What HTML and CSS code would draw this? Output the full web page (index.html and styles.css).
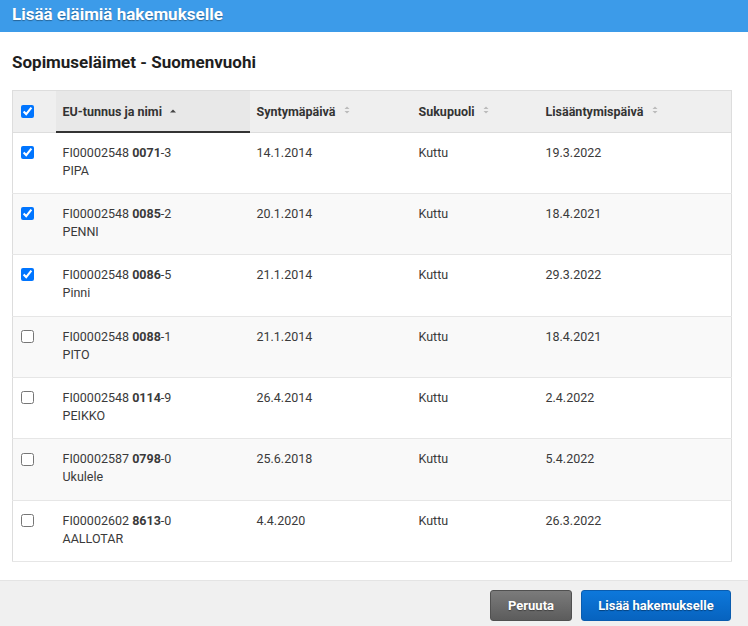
FILE: index.html
```html
<!DOCTYPE html>
<html lang="fi">
<head>
<meta charset="utf-8">
<title>Lisää eläimiä hakemukselle</title>
<link rel="stylesheet" href="styles.css">
</head>
<body>
<div class="dialog">
  <header class="titlebar">Lisää eläimiä hakemukselle</header>
  <main class="content">
    <h2 class="subtitle">Sopimuseläimet - Suomenvuohi</h2>
    <table class="grid">
      <colgroup>
        <col class="c-check"><col class="c-eu"><col class="c-birth"><col class="c-sex"><col class="c-repro">
      </colgroup>
      <thead>
        <tr>
          <th class="check"><input type="checkbox" checked></th>
          <th class="sorted">EU-tunnus ja nimi <svg class="sort" width="8" height="8" viewBox="0 0 8 8"><path d="M1 5.5 L4 2.5 L7 5.5 Z" fill="#444"/></svg></th>
          <th>Syntymäpäivä <svg class="sort" width="8" height="10" viewBox="0 0 8 10"><path d="M1.5 4 L4 1.5 L6.5 4 Z M1.5 6 L4 8.5 L6.5 6 Z" fill="#bbb"/></svg></th>
          <th>Sukupuoli <svg class="sort" width="8" height="10" viewBox="0 0 8 10"><path d="M1.5 4 L4 1.5 L6.5 4 Z M1.5 6 L4 8.5 L6.5 6 Z" fill="#bbb"/></svg></th>
          <th>Lisääntymispäivä <svg class="sort" width="8" height="10" viewBox="0 0 8 10"><path d="M1.5 4 L4 1.5 L6.5 4 Z M1.5 6 L4 8.5 L6.5 6 Z" fill="#bbb"/></svg></th>
        </tr>
      </thead>
      <tbody>
        <tr><td class="check"><input type="checkbox" checked></td><td>FI00002548 <b>0071</b>-3<br>PIPA</td><td>14.1.2014</td><td>Kuttu</td><td>19.3.2022</td></tr>
        <tr><td class="check"><input type="checkbox" checked></td><td>FI00002548 <b>0085</b>-2<br>PENNI</td><td>20.1.2014</td><td>Kuttu</td><td>18.4.2021</td></tr>
        <tr><td class="check"><input type="checkbox" checked></td><td>FI00002548 <b>0086</b>-5<br>Pinni</td><td>21.1.2014</td><td>Kuttu</td><td>29.3.2022</td></tr>
        <tr><td class="check"><input type="checkbox"></td><td>FI00002548 <b>0088</b>-1<br>PITO</td><td>21.1.2014</td><td>Kuttu</td><td>18.4.2021</td></tr>
        <tr><td class="check"><input type="checkbox"></td><td>FI00002548 <b>0114</b>-9<br>PEIKKO</td><td>26.4.2014</td><td>Kuttu</td><td>2.4.2022</td></tr>
        <tr><td class="check"><input type="checkbox"></td><td>FI00002587 <b>0798</b>-0<br>Ukulele</td><td>25.6.2018</td><td>Kuttu</td><td>5.4.2022</td></tr>
        <tr><td class="check"><input type="checkbox"></td><td>FI00002602 <b>8613</b>-0<br>AALLOTAR</td><td>4.4.2020</td><td>Kuttu</td><td>26.3.2022</td></tr>
      </tbody>
    </table>
  </main>
  <footer class="footer">
    <button class="btn btn-cancel">Peruuta</button>
    <button class="btn btn-primary">Lisää hakemukselle</button>
  </footer>
</div>
</body>
</html>
```
FILE: styles.css
```css
html, body {
  margin: 0;
  padding: 0;
  background: #fff;
}
body {
  font-family: Roboto, "Liberation Sans", Arial, sans-serif;
  color: #333;
  width: 748px;
  height: 626px;
  overflow: hidden;
}
.dialog {
  display: flex;
  flex-direction: column;
  height: 626px;
}
.titlebar {
  height: 32px;
  line-height: 29px;
  background: #3c9be9;
  color: #fff;
  font-weight: 700;
  font-size: 17px;
  padding-left: 12px;
  text-shadow: 0 1px 1px rgba(0,0,0,0.35);
}
.content {
  flex: 1;
  padding: 0 17px 0 12px;
}
.subtitle {
  margin: 20px 0 0;
  height: 38px;
  font-size: 17px;
  line-height: 21px;
  font-weight: 700;
  color: #1e1e1e;
}
.grid {
  width: 719px;
  border-collapse: collapse;
  table-layout: fixed;
  border: 1px solid #ddd;
  font-size: 12.5px;
}
.c-check { width: 43px; }
.c-eu { width: 194px; }
.c-birth { width: 162px; }
.c-sex { width: 127px; }
.c-repro { width: 193px; }
.grid th {
  background: #efefef;
  height: 40px;
  padding: 0 7px;
  text-align: left;
  font-weight: 700;
  color: #333;
  border-bottom: 1px solid #ddd;
  vertical-align: middle;
  white-space: nowrap;
}
.grid th.sorted {
  background: #e8e8e8;
  border-bottom: 2px solid #333;
}
.grid th.check, .grid td.check {
  padding: 0 0 0 7px;
}
.sort {
  margin-left: 4px;
  vertical-align: 1px;
}
.grid td {
  height: 61.4px;
  box-sizing: border-box;
  padding: 11px 7px 0;
  vertical-align: top;
  line-height: 18px;
  color: #3a3a3a;
  border-bottom: 1px solid #e6e6e6;
}
.grid td.check {
  padding-top: 10px;
}
.grid b {
  font-weight: 700;
}
.grid tbody tr:nth-child(even) td {
  background: #f9f9f9;
}
.grid input[type="checkbox"] {
  width: 13px;
  height: 13px;
  margin: 3px 3px 3px 1px;
  vertical-align: middle;
}
.footer {
  height: 46px;
  background: #f0f0f0;
  border-top: 1px solid #e4e4e4;
  display: flex;
  justify-content: flex-end;
  align-items: flex-start;
  gap: 9px;
  padding: 9px 17px 0 0;
  box-sizing: border-box;
}
.btn {
  height: 31px;
  border-radius: 3px;
  font-family: Roboto, "Liberation Sans", Arial, sans-serif;
  font-weight: 700;
  font-size: 13px;
  color: #fff;
  text-shadow: 0 1px 1px rgba(0,0,0,0.4);
  cursor: pointer;
  padding: 0;
  white-space: nowrap;
}
.btn-cancel {
  width: 82px;
  background: linear-gradient(#7b7b7b, #5c5c5c);
  border: 1px solid #505050;
}
.btn-primary {
  width: 150px;
  background: linear-gradient(#0d78db, #0763bf);
  border: 1px solid #0a5cae;
}
```
